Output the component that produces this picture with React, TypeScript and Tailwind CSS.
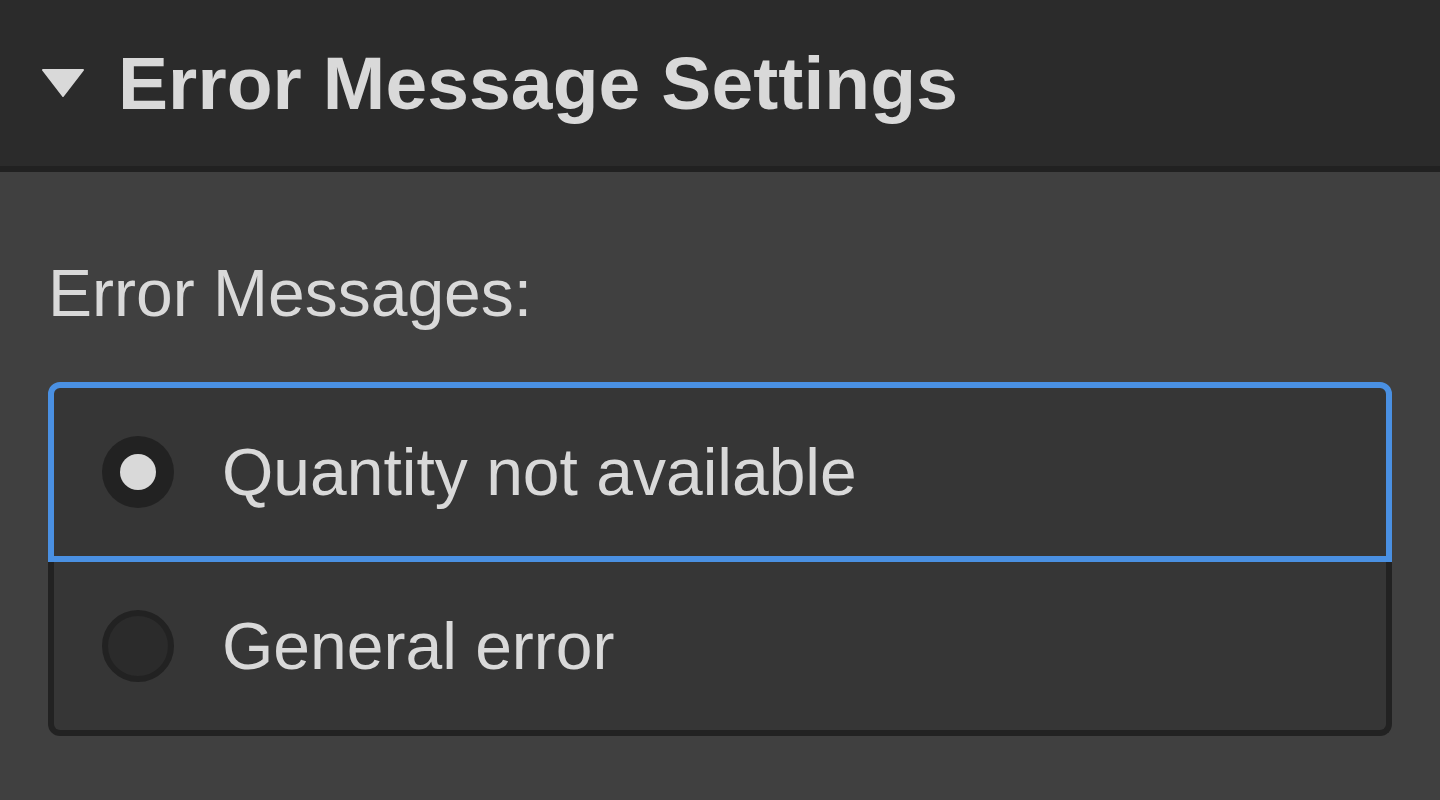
const options = [
  { label: "Quantity not available", selected: true },
  { label: "General error", selected: false },
];

function Radio({ on }: { on: boolean }) {
  if (on) {
    return (
      <span className="flex size-[72px] shrink-0 items-center justify-center rounded-full bg-[#222222]">
        <span className="size-[36px] rounded-full bg-[#d9d9d9]" />
      </span>
    );
  }
  return <span className="size-[72px] shrink-0 rounded-full border-[6px] border-[#222222] bg-[#2b2b2b]" />;
}

export default function App() {
  return (
    <div className="h-[800px] w-[1440px] overflow-hidden bg-[#404040] font-['Liberation_Sans',Arial,sans-serif] text-[#d9d9d9]">
      <div className="flex h-[166px] items-center gap-[34px] bg-[#2b2b2b] px-[42px]">
        <svg width="42" height="28" viewBox="0 0 42 28" className="shrink-0">
          <polygon points="1,1 41,1 21,27" fill="#d9d9d9" stroke="#d9d9d9" strokeWidth="2" strokeLinejoin="round" />
        </svg>
        <h1 className="text-[75px] font-bold leading-none tracking-[0.1px]">Error Message Settings</h1>
      </div>
      <div className="h-[6px] bg-[#212121]" />

      <div className="px-[48px] pt-[88px]">
        <p className="text-[66px] leading-none">Error Messages:</p>
        <div className="mt-[56px]">
          {options.map((o, i) => (
            <div
              key={o.label}
              className={
                i === 0
                  ? "flex h-[180px] items-center gap-[48px] rounded-t-[12px] border-[6px] border-[#4a90e2] bg-[#363636] pl-[48px]"
                  : "flex h-[174px] items-center gap-[48px] rounded-b-[12px] border-x-[6px] border-b-[6px] border-[#222222] bg-[#363636] pl-[48px]"
              }
            >
              <Radio on={o.selected} />
              <span className="text-[66px] leading-none">{o.label}</span>
            </div>
          ))}
        </div>
      </div>
    </div>
  );
}
